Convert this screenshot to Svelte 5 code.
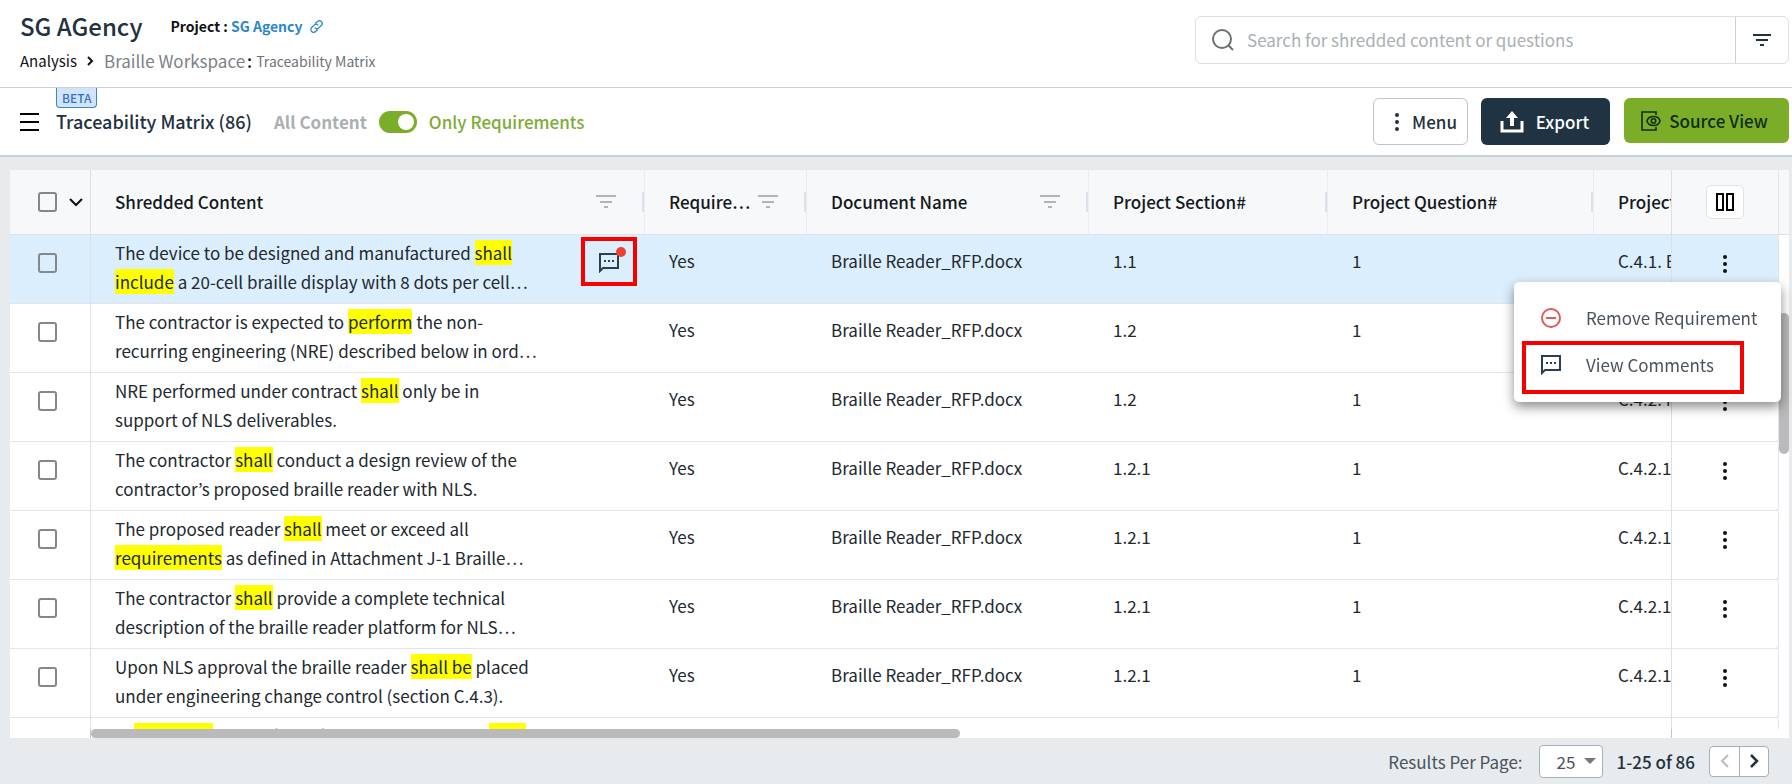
<script>
  let onlyRequirements = $state(true);
  let search = $state('');
  let perPage = $state('25');
  let menuOpen = $state(true);

  const columns = [
    { label: 'Shredded Content', width: 554, filter: true },
    { label: 'Requirement', short: 'Require…', width: 162, filter: true },
    { label: 'Document Name', width: 282, filter: true },
    { label: 'Project Section#', width: 239 },
    { label: 'Project Question#', width: 266 },
    { label: 'Project Section Title', width: 320 }
  ];

  // words in [brackets] get highlighted
  const rows = [
    { text: 'The device to be designed and manufactured [shall] [include] a 20-cell braille display with 8 dots per cell…', section: '1.1', title: 'C.4.1. Braille Reader', comments: true },
    { text: 'The contractor is expected to [perform] the non-recurring engineering (NRE) described below in ord…', section: '1.2', title: 'C.4.2. NRE' },
    { text: 'NRE performed under contract [shall] only be in support of NLS deliverables.', section: '1.2', title: 'C.4.2. NRE' },
    { text: 'The contractor [shall] conduct a design review of the contractor’s proposed braille reader with NLS.', section: '1.2.1', title: 'C.4.2.1. Design' },
    { text: 'The proposed reader [shall] meet or exceed all [requirements] as defined in Attachment J-1 Braille…', section: '1.2.1', title: 'C.4.2.1. Design' },
    { text: 'The contractor [shall] provide a complete technical description of the braille reader platform for NLS…', section: '1.2.1', title: 'C.4.2.1. Design' },
    { text: 'Upon NLS approval the braille reader [shall be] placed under engineering change control (section C.4.3).', section: '1.2.1', title: 'C.4.2.1. Design' },
    { text: 'In [necessary] the surface of the device we prove [shall] be reviewed', section: '1.2.1', title: 'C.4.2.1. Design' }
  ];

  const split = (text) => text.split(/\[|\]/);
</script>

{#snippet filterIcon(color)}
  <svg width="20" height="14" viewBox="0 0 20 14" fill={color} aria-hidden="true">
    <path d="M0 0h20v2H0zM4 6h12v2H4zM8 11h4v2H8z" />
  </svg>
{/snippet}

{#snippet commentIcon()}
  <svg width="20" height="20" viewBox="0 0 20 20" aria-hidden="true">
    <path d="M1 18V1h18v14H4z" fill="none" stroke="#2c3e50" stroke-width="2" />
    <path d="M5 7h2v2H5zM9 7h2v2H9zM13 7h2v2h-2z" fill="#2c3e50" />
  </svg>
{/snippet}

{#snippet dots(color)}
  <svg width="6" height="18" viewBox="0 0 6 18" fill={color} aria-hidden="true">
    <circle cx="3" cy="2" r="2" /><circle cx="3" cy="9" r="2" /><circle cx="3" cy="16" r="2" />
  </svg>
{/snippet}

<div class="page">
  <header class="top">
    <div class="heading">
      <div class="title-line">
        <h1>SG AGency</h1>
        <p class="project">
          Project : <a href="#project">SG Agency
            <svg width="13" height="13" viewBox="0 0 14 14" fill="none" stroke="#2d86c9" stroke-width="1.4" stroke-linecap="round" aria-hidden="true">
              <path d="M6 3.6 8 1.7a2.9 2.9 0 0 1 4.2 4.2L9.6 8.5a2.9 2.9 0 0 1-4.1 0" />
              <path d="M8 10.4 6 12.3a2.9 2.9 0 0 1-4.2-4.2l2.6-2.6a2.9 2.9 0 0 1 4.1 0" />
            </svg></a>
        </p>
      </div>
      <nav class="crumbs">
        <a href="#analysis">Analysis</a>
        <svg width="7" height="10" viewBox="0 0 7 10" fill="none" stroke="#111" stroke-width="2" aria-hidden="true"><path d="m1 1 4 4-4 4" /></svg>
        <span class="workspace">Braille Workspace<b>:</b></span>
        <span class="current">Traceability Matrix</span>
      </nav>
    </div>
    <div class="search">
      <svg width="24" height="24" viewBox="0 0 24 24" fill="none" stroke="#6b7073" stroke-width="2" aria-hidden="true">
        <circle cx="11" cy="11" r="9" /><path d="m17 17 5 5" />
      </svg>
      <input type="text" bind:value={search} placeholder="Search for shredded content or questions" aria-label="Search" />
      <button class="search-filter" aria-label="Filter">
        <svg width="18" height="13" viewBox="0 0 18 13" fill="#22313f" aria-hidden="true"><path d="M0 0h18v2H0zM3 5h12v2H3zM7 10h4v2H7z" /></svg>
      </button>
    </div>
  </header>

  <div class="toolbar">
    <button class="burger" aria-label="Open navigation">
      <svg width="19" height="18" viewBox="0 0 19 18" fill="#000" aria-hidden="true"><path d="M0 0h19v2H0zM0 8h19v2H0zM0 16h19v2H0z" /></svg>
    </button>
    <h2>Traceability Matrix (86)<span class="beta">BETA</span></h2>
    <label class="switch">
      <span class="off">All Content</span>
      <input type="checkbox" bind:checked={onlyRequirements} />
      <span class="on">Only Requirements</span>
    </label>
    <div class="actions">
      <button class="btn menu">{@render dots('#22313f')} Menu</button>
      <button class="btn export">
        <svg width="24" height="22" viewBox="0 0 24 22" aria-hidden="true">
          <path d="M2 10v10h20V10" fill="none" stroke="#fff" stroke-width="3" />
          <path d="M12 0l6 7h-4v8h-4V7H6z" fill="#fff" />
        </svg>
        Export
      </button>
      <button class="btn source">
        <svg width="20" height="20" viewBox="0 0 20 20" fill="none" stroke="#0f2d10" stroke-width="1.6" aria-hidden="true">
          <path d="M15 4V1H1v18h14v-3" />
          <path d="M6 10c1.500-6 11.500-6 13 0-1.500 6-11.500 6-13 0z" />
          <circle cx="12.500" cy="10" r="2.200" />
        </svg>
        Source View
      </button>
    </div>
  </div>

  <main>
    <div class="grid">
      <div class="viewport">
        <table>
          <colgroup>
            <col style="width: 81px" />
            {#each columns as col}<col style="width: {col.width}px" />{/each}
            <col style="width: 108px" />
          </colgroup>
          <thead>
            <tr>
              <th class="pin-left">
                <div class="select-all">
                  <input type="checkbox" aria-label="Select all rows" />
                  <button aria-label="Selection options">
                    <svg width="14" height="9" viewBox="0 0 14 9" fill="none" stroke="#111" stroke-width="2" aria-hidden="true"><path d="m1 1 6 6 6-6" /></svg>
                  </button>
                </div>
              </th>
              {#each columns as col}
                <th>
                  <div class="th">
                    <span>{col.short ?? col.label}</span>
                    {#if col.filter}
                      <button aria-label="Filter {col.label}">{@render filterIcon('#b2b5b8')}</button>
                    {/if}
                  </div>
                </th>
              {/each}
              <th class="pin-right">
                <button class="columns-btn" aria-label="Choose columns">
                  <svg width="18" height="18" viewBox="0 0 18 18" fill="none" stroke="#000" stroke-width="2" aria-hidden="true"><path d="M1 1h6v16H1zM11 1h6v16h-6z" /></svg>
                </button>
              </th>
            </tr>
          </thead>
          <tbody>
            {#each rows as row, i}
              <tr class:selected={i === 0}>
                <td class="pin-left"><input type="checkbox" aria-label="Select row {i + 1}" /></td>
                <td class="content">
                  <div class="content-cell">
                    <p>{#each split(row.text) as part, n}{#if n % 2}<mark>{part}</mark>{:else}{part}{/if}{/each}</p>
                    {#if row.comments}
                      <button class="comment" aria-label="Comments">
                        <span>{@render commentIcon()}</span>
                      </button>
                    {/if}
                  </div>
                </td>
                <td>Yes</td>
                <td>Braille Reader_RFP.docx</td>
                <td>{row.section}</td>
                <td>1</td>
                <td>{row.title}</td>
                <td class="pin-right">
                  <button class="row-menu" aria-label="Row actions" onclick={() => (menuOpen = !menuOpen)}>{@render dots('#111')}</button>
                </td>
              </tr>
            {/each}
          </tbody>
        </table>
      </div>
      <div class="v-scroll"><i></i></div>
      <div class="h-scroll"><div class="track"><i></i></div></div>

      {#if menuOpen}
        <div class="popup">
          <button>
            <svg width="20" height="20" viewBox="0 0 20 20" fill="none" stroke="#e05a5a" stroke-width="2" aria-hidden="true"><circle cx="10" cy="10" r="9" /><path d="M5 10h10" /></svg>
            Remove Requirement
          </button>
          <button class="marked">{@render commentIcon()} View Comments</button>
        </div>
      {/if}
    </div>
  </main>

  <footer>
    <label for="per-page">Results Per Page:</label>
    <div class="select">
      <select id="per-page" bind:value={perPage}>
        <option>25</option>
        <option>50</option>
        <option>100</option>
      </select>
    </div>
    <strong>1-25 of 86</strong>
    <div class="pager">
      <button disabled aria-label="Previous page">
        <svg width="9" height="14" viewBox="0 0 9 14" fill="none" stroke="#b9bdc1" stroke-width="2" aria-hidden="true"><path d="M8 1 2 7l6 6" /></svg>
      </button>
      <button aria-label="Next page">
        <svg width="9" height="14" viewBox="0 0 9 14" fill="none" stroke="#22313f" stroke-width="2.500" aria-hidden="true"><path d="m1 1 6 6-6 6" /></svg>
      </button>
    </div>
  </footer>
</div>

<style>
  :global(body) {
    margin: 0;
    background: #e7ebee;
  }

  .page {
    display: flex;
    flex-direction: column;
    height: 100vh;
    overflow: hidden;
    font-family: "Noto Sans CJK KR", "Source Sans Pro", sans-serif;
    font-size: 17px;
    color: #22292f;
  }

  .page * {
    box-sizing: border-box;
  }

  h1, h2, p {
    margin: 0;
    font-weight: 500;
  }

  button, input, select {
    font: inherit;
    color: inherit;
  }

  button {
    padding: 0;
    border: none;
    background: none;
    cursor: pointer;
  }

  svg {
    display: block;
    flex: none;
  }

  a {
    color: inherit;
    text-decoration: none;
  }

  .top {
    display: flex;
    justify-content: space-between;
    align-items: flex-start;
    height: 88px;
    padding: 8px 3px 0 20px;
    background: #fff;
    border-bottom: 1px solid #cdd1d1;
  }

  .title-line {
    display: flex;
    align-items: center;
    gap: 28px;
  }

  h1 {
    font-size: 24px;
    line-height: 35px;
    color: #22313f;
  }

  .project {
    font-size: 14px;
    font-weight: 700;
    color: #111;
  }

  .project a {
    color: #2d86c9;
  }

  .project svg {
    display: inline-block;
    margin-left: 4px;
    vertical-align: -1px;
  }

  .crumbs {
    display: flex;
    align-items: center;
    gap: 10px;
    margin-top: 4px;
    line-height: 28px;
    font-size: 15px;
  }

  .crumbs a {
    color: #111;
  }

  .workspace {
    font-size: 17px;
    color: #7b8187;
  }

  .workspace b {
    margin-left: 2px;
    font-weight: 500;
    color: #111;
  }

  .workspace + .current {
    margin-left: -6px;
    font-size: 14px;
    color: #6c7379;
  }

  .search {
    display: flex;
    align-items: center;
    width: 594px;
    height: 48px;
    margin-top: 8px;
    padding-left: 15px;
    border: 1px solid #dbe2e4;
    border-radius: 6px;
  }

  .search input {
    flex: 1;
    min-width: 0;
    padding: 0 12px 2px;
    border: none;
    outline: none;
    background: none;
  }

  .search input::placeholder {
    color: #a9afb4;
    opacity: 1;
  }

  .search-filter {
    display: flex;
    align-items: center;
    justify-content: center;
    width: 53px;
    height: 46px;
    border-left: 1px solid #cdd1d1;
  }

  .toolbar {
    display: flex;
    align-items: center;
    height: 69px;
    padding: 0 3px 0 20px;
    background: #fff;
    border-bottom: 2px solid #ccd2d4;
  }

  h2 {
    position: relative;
    margin: 0 22px 0 17px;
    padding-bottom: 2px;
    font-size: 18px;
    color: #22313f;
  }

  .beta {
    position: absolute;
    top: -20px;
    left: 0;
    padding: 0 5px;
    font-size: 12px;
    line-height: 19px;
    color: #3b6fc4;
    background: #d0e5fd;
    border: 1px solid #3d87c0;
    border-top: none;
    border-radius: 0 0 4px 4px;
  }

  .switch {
    display: flex;
    align-items: center;
    gap: 12px;
    font-weight: 500;
    cursor: pointer;
  }

  .off {
    font-weight: 700;
    color: #a9afb3;
  }

  .on {
    color: #7dab35;
  }

  .switch input {
    appearance: none;
    display: flex;
    align-items: center;
    width: 38px;
    height: 22px;
    margin: 0;
    padding: 3px;
    border-radius: 11px;
    background: #a9afb3;
  }

  .switch input::before {
    content: "";
    width: 16px;
    height: 16px;
    border-radius: 50%;
    background: #fff;
  }

  .switch input:checked {
    justify-content: flex-end;
    background: #7bad28;
  }

  .actions {
    display: flex;
    align-items: flex-start;
    margin-left: auto;
  }

  .btn {
    display: flex;
    align-items: center;
    justify-content: center;
    height: 47px;
    border-radius: 6px;
    font-weight: 500;
  }

  .menu {
    gap: 12px;
    width: 95px;
    margin-right: 13px;
    padding-left: 10px;
    border: 1px solid #bfc4c7;
    color: #22313f;
  }

  .export {
    gap: 12px;
    width: 129px;
    margin-right: 14px;
    padding-right: 2px;
    background: #1f3343;
    color: #fff;
  }

  .source {
    gap: 8px;
    width: 165px;
    height: 45px;
    padding-right: 4px;
    background: #7bad28;
    color: #0f2d10;
  }

  main {
    display: flex;
    flex: 1;
    min-height: 0;
    padding: 13px 3px 0 10px;
  }

  .grid {
    position: relative;
    display: grid;
    grid-template: 1fr 9px / 1fr 10px;
    flex: 1;
    min-width: 0;
    background: #fff;
  }

  .viewport {
    min-width: 0;
    min-height: 0;
    overflow: hidden;
  }

  table {
    width: 100%;
    table-layout: fixed;
    border-collapse: separate;
    border-spacing: 0;
  }

  th, td {
    padding: 0 0 0 24px;
    text-align: left;
    white-space: nowrap;
    overflow: hidden;
    border-bottom: 1px solid #e2e6eb;
  }

  th {
    height: 65px;
    background: #f6f8fa;
    border-right: 1px solid #e9ecf0;
    border-bottom-color: #dde2e8;
    font-weight: 500;
    color: #14191d;
  }

  td {
    height: 69px;
    padding-top: 11px;
    line-height: 29px;
    vertical-align: top;
    background: #fff;
  }

  .selected td {
    background: #dbeefd;
  }

  .pin-left, .pin-right {
    position: sticky;
    z-index: 1;
  }

  .pin-left {
    left: 0;
    border-right: 1px solid #dde0e4;
  }

  .pin-right {
    right: 0;
    padding-left: 0;
    border-left: 1px solid #dcdfe3;
    border-right: 1px solid #e2e6eb;
  }

  td.pin-right {
    border-radius: 0 4px 4px 0;
  }

  th.pin-left, td.pin-left {
    padding-left: 28px;
  }

  td.pin-left {
    padding-top: 18px;
    line-height: 0;
  }

  table input {
    appearance: none;
    width: 19px;
    height: 20px;
    margin: 0;
    border: 2px solid #85888b;
    border-radius: 3px;
  }

  table input:checked {
    background: #7bad28;
  }

  .select-all {
    display: flex;
    align-items: center;
    gap: 12px;
  }

  .th {
    display: flex;
    align-items: center;
    justify-content: space-between;
    height: 20px;
    padding-right: 26px;
    border-right: 2px solid #dde2ea;
  }

  .th span {
    padding-bottom: 2px;
  }

  .columns-btn, .row-menu {
    display: flex;
    align-items: center;
    justify-content: center;
    margin: 0 auto;
  }

  .columns-btn {
    width: 38px;
    height: 34px;
    border: 1px solid #dfe3e6;
    border-radius: 5px;
    background: #fff;
  }

  .row-menu {
    width: 30px;
    height: 36px;
  }

  td.content {
    padding-top: 0;
  }

  .content-cell {
    display: flex;
    justify-content: space-between;
    align-items: flex-start;
    padding-right: 8px;
  }

  .content-cell p {
    width: 422px;
    padding: 3px 0 7px;
    font-weight: 400;
    white-space: normal;
  }

  mark {
    background: #ff0;
    color: inherit;
  }

  .comment {
    padding: 12px 14px 9px;
    margin-top: 2px;
    border: 4px solid #f80000;
  }

  .comment span {
    position: relative;
    display: block;
  }

  .comment span::after {
    content: "";
    position: absolute;
    top: -6px;
    right: -7px;
    width: 10px;
    height: 10px;
    border-radius: 50%;
    background: #ea4335;
  }

  .v-scroll {
    padding-top: 143px;
    background: linear-gradient(#f6f8fa 64px, #dde2e8 64px, #dde2e8 65px, #fff 65px);
  }

  .v-scroll i {
    display: block;
    height: 141px;
    border-radius: 5px;
    background: #bababa;
  }

  .h-scroll {
    display: flex;
    padding: 0 107px 0 80px;
  }

  .track {
    flex: 1;
    border: solid #c4c6c9;
    border-width: 0 1px;
  }

  .track i {
    display: block;
    width: 55%;
    height: 9px;
    border-radius: 5px;
    background: #bababa;
  }

  .popup {
    position: absolute;
    top: 112px;
    right: 8px;
    z-index: 5;
    display: flex;
    flex-direction: column;
    align-items: flex-start;
    width: 267px;
    padding: 14px 8px 8px;
    border-radius: 5px;
    background: #fff;
    box-shadow: 0 5px 12px rgba(0, 0, 0, 0.45);
  }

  .popup button {
    display: flex;
    align-items: center;
    gap: 25px;
    height: 45px;
    padding: 0 0 2px 19px;
    white-space: nowrap;
    color: #4a535b;
  }

  .popup .marked {
    width: 222px;
    height: 53px;
    padding: 0 0 6px 15px;
    border: 4px solid #f80000;
  }

  footer {
    display: flex;
    align-items: center;
    justify-content: flex-end;
    height: 46px;
    padding-right: 23px;
    color: #4a535b;
  }

  .select {
    position: relative;
    margin: 0 14px 0 16px;
  }

  .select select {
    appearance: none;
    display: block;
    width: 64px;
    height: 33px;
    padding: 0 0 0 17px;
    border: 1px solid #a9afb6;
    border-radius: 4px;
    background: #fff;
  }

  .select::after {
    content: "";
    position: absolute;
    top: 13px;
    right: 7px;
    border: 6px solid transparent;
    border-top-color: #777;
    border-bottom: none;
    pointer-events: none;
  }

  strong {
    font-weight: 500;
    color: #22313f;
  }

  .pager {
    display: flex;
    margin-left: 14px;
    border: 1px solid #a9afb6;
    border-radius: 4px;
    background: #fff;
  }

  .pager button {
    display: flex;
    align-items: center;
    justify-content: center;
    width: 29px;
    height: 29px;
  }

  .pager button + button {
    border-left: 1px solid #a9afb6;
  }
</style>
